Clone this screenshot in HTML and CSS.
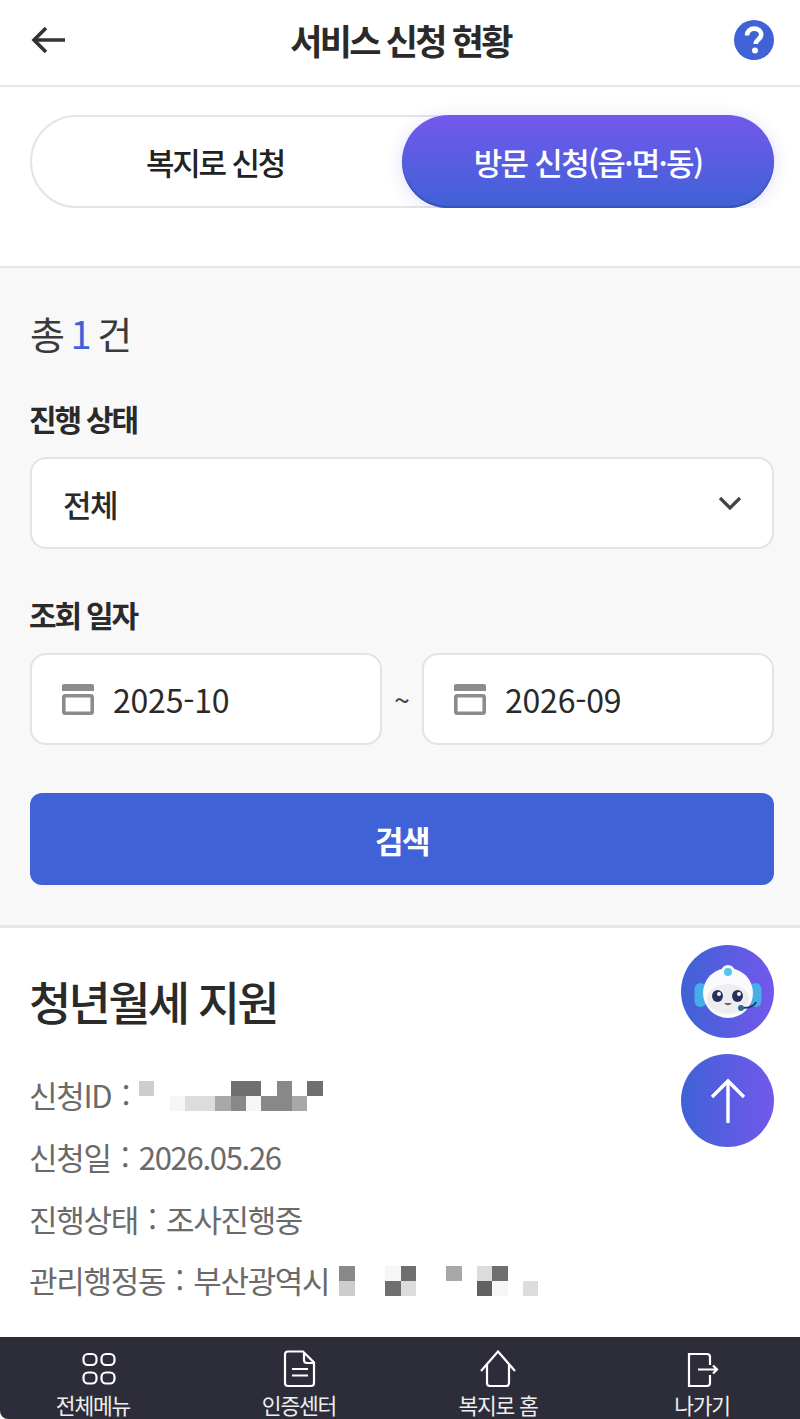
FILE: index.html

```html
<!DOCTYPE html>
<html lang="ko">
<head>
  <meta charset="UTF-8">
  <meta name="viewport" content="width=device-width, initial-scale=1.0">
  <title>서비스 신청 현황</title>
  <link rel="stylesheet" href="styles.css">
</head>
<body>
  <div class="app">
    <header class="top-bar">
      <svg class="back-icon" width="36" height="30" viewBox="0 0 36 30" fill="none" stroke="#333" stroke-width="3.6"><path d="M34 15H3M15 3 3 15l12 12"/></svg>
      <h1>서비스 신청 현황</h1>
      <svg class="help-icon" width="40" height="40" viewBox="0 0 40 40"><circle cx="20" cy="20" r="20" fill="#3f62d6"/><path d="M13 15.500c0-4.200 3.200-6.900 7.200-6.900 4 0 7 2.400 7 5.900 0 5-5.600 5-5.600 9.600" fill="none" stroke="#fff" stroke-width="4.600"/><circle cx="21" cy="30.500" r="3" fill="#fff"/></svg>
    </header>

    <section class="tab-section">
      <div class="tabs">
        <div class="tab">복지로 신청</div>
        <div class="tab active">방문 신청(읍·면·동)</div>
      </div>
    </section>

    <section class="search-section">
      <p class="total">총 <b>1</b> 건</p>
      <div class="form-group">
        <label>진행 상태</label>
        <div class="field select">
          <span>전체</span>
          <svg width="24" height="14" viewBox="0 0 24 14" fill="none" stroke="#444" stroke-width="3.200"><path d="M2 2l10 10L22 2"/></svg>
        </div>
      </div>
      <div class="form-group">
        <label>조회 일자</label>
        <div class="date-row">
          <div class="field date">
            <svg class="cal-icon" width="32" height="32" viewBox="0 0 32 32"><path d="M0 3a2 2 0 0 1 2-2h28a2 2 0 0 1 2 2v5H0z" fill="#8c8c8c"/><rect x="1.800" y="12.800" width="28.400" height="17.400" rx="1.500" fill="none" stroke="#8c8c8c" stroke-width="3.600"/></svg>
            <span>2025-10</span>
          </div>
          <span class="tilde">~</span>
          <div class="field date">
            <svg class="cal-icon" width="32" height="32" viewBox="0 0 32 32"><path d="M0 3a2 2 0 0 1 2-2h28a2 2 0 0 1 2 2v5H0z" fill="#8c8c8c"/><rect x="1.800" y="12.800" width="28.400" height="17.400" rx="1.500" fill="none" stroke="#8c8c8c" stroke-width="3.600"/></svg>
            <span>2026-09</span>
          </div>
        </div>
      </div>
      <button type="button" class="search-btn">검색</button>
    </section>

    <section class="result">
      <h2>청년월세 지원</h2>
      <ul class="info-list">
        <li>
          <span>신청ID :</span>
          <div class="mosaic">
            <i class="s3"></i><i></i><i></i><i></i><i></i><i></i><i class="s6"></i><i class="s6"></i><i></i><i class="s5"></i><i></i><i class="s6"></i><i></i>
            <i></i><i></i><i class="s1"></i><i class="s2"></i><i class="s2"></i><i class="s4"></i><i class="s5"></i><i class="s1"></i><i class="s5"></i><i class="s5"></i><i class="s4"></i><i></i><i></i>
          </div>
        </li>
        <li>신청일 : 2026.05.26</li>
        <li>진행상태 : 조사진행중</li>
        <li>
          <span>관리행정동 : 부산광역시</span>
          <div class="mosaic">
            <i class="s5"></i><i></i><i></i><i class="s1"></i><i class="s6"></i><i></i><i></i><i class="s4"></i><i></i><i class="s2"></i><i class="s6"></i><i></i><i></i>
            <i class="s3"></i><i></i><i></i><i class="s6"></i><i class="s2"></i><i></i><i></i><i></i><i></i><i class="s7"></i><i class="s1"></i><i></i><i class="s2"></i>
          </div>
        </li>
      </ul>

      <div class="float-btns">
        <div class="float-btn">
          <svg class="bot" width="72" height="60" viewBox="0 0 72 60">
            <rect x="2.500" y="21" width="12" height="24" rx="6" fill="#45aee6"/>
            <rect x="57.500" y="21" width="12" height="24" rx="6" fill="#45aee6"/>
            <circle cx="36" cy="31" r="25" fill="#fbfbfd"/>
            <circle cx="36" cy="10" r="7" fill="#fbfbfd"/>
            <circle cx="36" cy="10" r="4" fill="#52c8ee"/>
            <ellipse cx="36" cy="37" rx="21" ry="15" fill="#eeeef1"/>
            <ellipse cx="25.500" cy="34" rx="5.500" ry="6" fill="#27305a"/>
            <ellipse cx="45.500" cy="34" rx="5.500" ry="6" fill="#27305a"/>
            <circle cx="27" cy="32" r="2" fill="#fff"/>
            <circle cx="47" cy="32" r="2" fill="#fff"/>
            <path d="M32 41q4 4.500 8 0z" fill="#7a5a5f"/>
            <path d="M64 40q-2 6-14 6" fill="none" stroke="#27305a" stroke-width="1.800"/>
            <circle cx="49" cy="46" r="3" fill="#2a6f8f"/>
          </svg>
        </div>
        <div class="float-btn">
          <svg width="36" height="46" viewBox="0 0 36 46" fill="none" stroke="#fff" stroke-width="3.400"><path d="M18 45V3M2 19 18 3l16 16"/></svg>
        </div>
      </div>
    </section>

    <nav class="bottom-nav">
      <div class="nav-item">
        <svg width="46" height="38" viewBox="0 0 46 38" fill="none" stroke="#fff" stroke-width="2.200"><rect x="13.500" y="4" width="13" height="11" rx="4.500"/><rect x="31.500" y="4" width="13" height="11" rx="4.500"/><rect x="13.500" y="22.500" width="13" height="11" rx="4.500"/><rect x="31.500" y="22.500" width="13" height="11" rx="4.500"/></svg>
        <span>전체메뉴</span>
      </div>
      <div class="nav-item">
        <svg width="36" height="38" viewBox="0 0 36 38" fill="none" stroke="#fff" stroke-width="2.200"><path d="M7 1.500h15l11 11V33a3 3 0 0 1-3 3H7a3 3 0 0 1-3-3V4.500a3 3 0 0 1 3-3z"/><path d="M23 2v8a3 3 0 0 0 3 3h7M11 19h16M11 25.500h16"/></svg>
        <span>인증센터</span>
      </div>
      <div class="nav-item">
        <svg width="36" height="38" viewBox="0 0 36 38" fill="none" stroke="#fff" stroke-width="2.200"><path d="M1 21 18 1.500 35 21"/><path d="M7 14v19a3 3 0 0 0 3 3h16a3 3 0 0 0 3-3V14"/></svg>
        <span>복지로 홈</span>
      </div>
      <div class="nav-item">
        <svg width="36" height="38" viewBox="0 0 36 38" fill="none" stroke="#fff" stroke-width="2.200"><path d="M26 15V7a3 3 0 0 0-3-3H5v32h18a3 3 0 0 0 3-3v-8M14 19.500h19M29 15.500l4 4-4 4"/></svg>
        <span>나가기</span>
      </div>
    </nav>
  </div>
</body>
</html>
```

FILE: styles.css

```css
* {
  box-sizing: border-box;
}

body {
  margin: 0;
  font-family: "Noto Sans CJK KR", "Noto Sans", sans-serif;
  color: #222;
  background: #fff;
}

.app {
  display: flex;
  flex-direction: column;
  height: 1419px;
  overflow: hidden;
}

.top-bar {
  height: 87px;
  flex: none;
  display: flex;
  align-items: center;
  justify-content: space-between;
  padding: 0 26px 6px 31px;
  border-bottom: 2px solid #e6e6e6;
}

.top-bar h1 {
  margin: 0;
  font-size: 35px;
  font-weight: 700;
  letter-spacing: -2.700px;
  color: #2a2a2a;
}

.tab-section {
  height: 181px;
  flex: none;
  padding: 28px 26px 0 30px;
  border-bottom: 2px solid #e6e6e6;
}

.tabs {
  display: flex;
  height: 93px;
  border: 2px solid #e5e5e5;
  border-radius: 47px;
}

.tab {
  flex: 1;
  display: flex;
  align-items: center;
  justify-content: center;
  padding-right: 4px;
  font-size: 31px;
  font-weight: 500;
  letter-spacing: -2.200px;
  color: #222;
}

.tab.active {
  flex: none;
  width: 372px;
  margin: -2px -2px -2px 0;
  padding-right: 0;
  color: #fff;
  letter-spacing: -1.700px;
  border-radius: 47px;
  background: linear-gradient(to bottom, #7258ec, #3f62d6);
  box-shadow: inset 0 -2px 1px #3552b5, 0 2px 16px rgba(100, 100, 230, 0.22);
  clip-path: inset(-20px -30px 0 -30px);
}

.search-section {
  height: 660px;
  flex: none;
  padding: 0 26px 0 30px;
  background: #f8f8f8;
  border-bottom: 3px solid #e6e6e6;
}

.total {
  margin: 0;
  padding-top: 38px;
  height: 126px;
  font-size: 38px;
  line-height: 54px;
  letter-spacing: -1px;
  word-spacing: -3px;
  color: #3a3a3a;
}

.total b {
  font-weight: 400;
  color: #3f62d6;
}

.form-group {
  margin-bottom: 41px;
}

.form-group label {
  display: block;
  height: 63px;
  padding-top: 2px;
  margin-left: -1px;
  font-size: 30px;
  line-height: 44px;
  font-weight: 700;
  letter-spacing: -2.200px;
  color: #2a2a2a;
}

.field {
  height: 92px;
  display: flex;
  align-items: center;
  background: #fff;
  border: 2px solid #e3e3e3;
  border-radius: 16px;
  color: #2a2a2a;
}

.select {
  justify-content: space-between;
  padding: 0 30px 0 31px;
  font-size: 31px;
  letter-spacing: -1.500px;
  font-weight: 500;
}

.date-row {
  display: flex;
  align-items: center;
}

.date {
  flex: 1;
  padding-left: 30px;
  gap: 19px;
  font-size: 32px;
  letter-spacing: -0.2px;
}

.tilde {
  width: 40px;
  text-align: center;
  font-size: 28px;
  color: #444;
}

.search-btn {
  display: block;
  width: 100%;
  height: 92px;
  margin-top: 48px;
  border: none;
  border-radius: 12px;
  background: #3f62d6;
  color: #fff;
  font-family: inherit;
  font-size: 31px;
  font-weight: 700;
  letter-spacing: -1.500px;
}

.result {
  flex: 1;
  padding: 0 26px 0 29px;
  position: relative;
}

.result h2 {
  margin: 0;
  padding-top: 40px;
  height: 136px;
  font-size: 46px;
  line-height: 64px;
  font-weight: 500;
  letter-spacing: -2.700px;
  color: #2a2a2a;
}

.info-list {
  list-style: none;
  margin: 0;
  padding: 0;
  font-size: 31px;
  letter-spacing: -1.300px;
  word-spacing: 3px;
  color: #6a6a6a;
}

.info-list li {
  height: 61.700px;
  display: flex;
  align-items: center;
  gap: 10px;
}

.mosaic {
  display: grid;
  grid-template-columns: repeat(13, 15.300px);
  grid-auto-rows: 15.300px;
  margin-top: 2px;
}

.s1 { background: #f6f6f6; }
.s2 { background: #dcdcdc; }
.s3 { background: #cdcdcd; }
.s4 { background: #a8a8a8; }
.s5 { background: #888; }
.s6 { background: #6f6f6f; }
.s7 { background: #606060; }

.float-btns {
  position: absolute;
  top: 17px;
  right: 26px;
  display: flex;
  flex-direction: column;
  gap: 16px;
}

.float-btn {
  width: 93px;
  height: 93px;
  display: flex;
  align-items: center;
  justify-content: center;
  border-radius: 50%;
  background: linear-gradient(to right, #3f62d6, #7258ec);
}

.bot {
  filter: blur(0.5px);
}

.bottom-nav {
  height: 82px;
  flex: none;
  display: flex;
  padding: 13px 0 0 33px;
  background: #2d2d39;
  color: #fff;
  border-bottom-left-radius: 8px;
}

.nav-item {
  width: 120px;
  display: flex;
  flex-direction: column;
  align-items: center;
}

.nav-item:nth-child(2) {
  margin-left: 86px;
}

.nav-item:nth-child(3) {
  margin-left: 79px;
}

.nav-item:nth-child(4) {
  margin-left: 84px;
}

.nav-item span {
  margin-top: 3px;
  font-size: 21.500px;
  line-height: 28px;
  letter-spacing: -1.200px;
  color: #eee;
}
```
